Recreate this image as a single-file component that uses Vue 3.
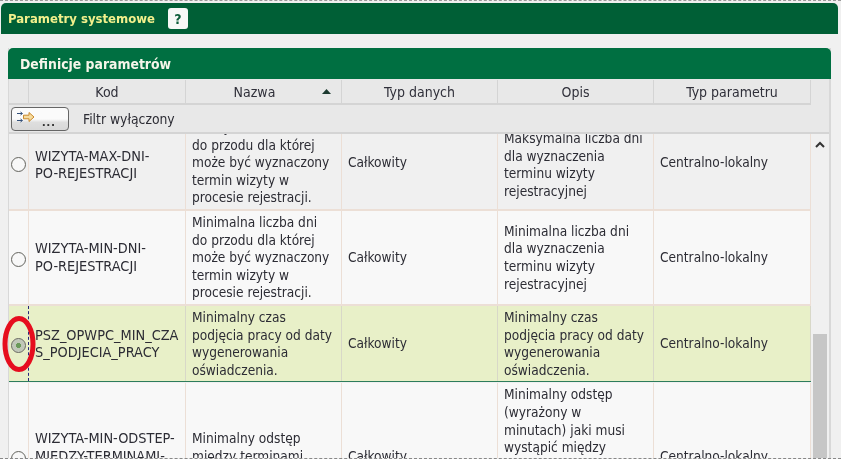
<script setup>
const cols = [
  { name: 'Kod' },
  { name: 'Nazwa', sort: true },
  { name: 'Typ danych' },
  { name: 'Opis' },
  { name: 'Typ parametru' },
]
const rows = [
  { cls: 'odd', kod: 'WIZYTA-MAX-DNI-\nPO-REJESTRACJI', nazwa: 'Maksymalna liczba dni\ndo przodu dla której\nmoże być wyznaczony\ntermin wizyty w\nprocesie rejestracji.', typ: 'Całkowity', opis: 'Maksymalna liczba dni\ndla wyznaczenia\nterminu wizyty\nrejestracyjnej', par: 'Centralno-lokalny' },
  { cls: 'even', kod: 'WIZYTA-MIN-DNI-\nPO-REJESTRACJI', nazwa: 'Minimalna liczba dni\ndo przodu dla której\nmoże być wyznaczony\ntermin wizyty w\nprocesie rejestracji.', typ: 'Całkowity', opis: 'Minimalna liczba dni\ndla wyznaczenia\nterminu wizyty\nrejestracyjnej', par: 'Centralno-lokalny' },
  { cls: 'sel', kod: 'PSZ_OPWPC_MIN_CZA\nS_PODJECIA_PRACY', nazwa: 'Minimalny czas\npodjęcia pracy od daty\nwygenerowania\noświadczenia.', typ: 'Całkowity', opis: 'Minimalny czas\npodjęcia pracy od daty\nwygenerowania\noświadczenia.', par: 'Centralno-lokalny' },
  { cls: 'even', kod: 'WIZYTA-MIN-ODSTEP-\nMIEDZY-TERMINAMI-\nWIZYT', nazwa: 'Minimalny odstęp\nmiędzy terminami\nwizyt.', typ: 'Całkowity', opis: 'Minimalny odstęp\n(wyrażony w\nminutach) jaki musi\nwystąpić między\nterminami wizyt\nw ramach jednej\nrejestracji w tym\nsamym dniu', par: 'Centralno-lokalny' },
]
</script>

<template>
  <div class="page">
    <div class="frame">
      <div class="titlebar">
        <span class="title">Parametry systemowe</span>
        <span class="help">?</span>
      </div>
      <div class="panel">
        <div class="panel-head">Definicje parametrów</div>
        <div class="head-row">
          <div class="hc first"></div>
          <div v-for="c in cols" :key="c.name" class="hc" :class="{ sorted: c.sort }">
            {{ c.name }}
            <svg v-if="c.sort" class="sort" width="9" height="5" viewBox="0 0 9 5"><path d="M4.5 0 L9 5 H0 Z" fill="#1c3a30" /></svg>
          </div>
        </div>
        <div class="filter-row">
          <button class="filter-btn">
            <svg class="filter-ico" width="18" height="12" viewBox="0 0 18 12">
              <path d="M0 2.5h5M0 9.5h5" stroke="#33507a" stroke-width="1.2" />
              <path d="M3.5 1 5.5 2.5 3.5 4M3.5 8 5.5 9.5 3.5 11" fill="none" stroke="#33507a" stroke-width="1" />
              <path d="M6.5 4.2h5.5V1.5L17 6l-5 4.5V7.8H6.5Z" fill="#f6dca0" stroke="#c9892c" stroke-width="1" />
            </svg>
            <span class="dots">...</span>
          </button>
          <span class="filter-text">Filtr wyłączony</span>
        </div>
        <div class="body">
          <div class="viewport">
            <div class="rows">
              <div v-for="r in rows" :key="r.kod" class="row" :class="r.cls">
                <div class="cell radio-cell"><span class="radio"></span></div>
                <div class="cell kod">{{ r.kod }}</div>
                <div class="cell">{{ r.nazwa }}</div>
                <div class="cell">{{ r.typ }}</div>
                <div class="cell">{{ r.opis }}</div>
                <div class="cell">{{ r.par }}</div>
              </div>
            </div>
          </div>
          <div class="scrollbar">
            <svg class="arrow" width="10" height="7" viewBox="0 0 10 7"><path d="M1 6 5 2l4 4" fill="none" stroke="#333" stroke-width="2" /></svg>
            <div class="thumb"></div>
          </div>
        </div>
      </div>
    </div>
    <svg class="mark" width="36" height="60" viewBox="0 0 36 60">
      <ellipse cx="17" cy="30" rx="14" ry="25.5" fill="none" stroke="#e60d1e" stroke-width="5" />
    </svg>
  </div>
</template>

<style>
html, body { margin: 0; background: #fff; }
</style>

<style scoped>
.page {
  position: relative;
  width: 841px;
  height: 461px;
  overflow: hidden;
  background: #fff;
  font-family: "DejaVu Sans Condensed", "DejaVu Sans", sans-serif;
  font-size: 13.6px;
  color: #2c2c34;
  filter: blur(0.3px);
}
.frame {
  box-sizing: border-box;
  height: 459px;
  padding: 2px 3px 0 1px;
  background: #f0f0f0;
  border-top: 1px dashed #999;
  border-bottom: 1px dashed #888;
  overflow: hidden;
}
.titlebar {
  display: flex;
  align-items: center;
  gap: 13px;
  height: 31px;
  padding-left: 7px;
  box-sizing: border-box;
  border-radius: 5px 5px 0 0;
  background: #005f36;
}
.title { color: #f2f08c; font-weight: 700; font-size: 13px; }
.help {
  width: 20px;
  height: 21px;
  display: flex;
  align-items: center;
  justify-content: center;
  border-radius: 3px;
  background: #f6f8f6;
  color: #0b5c38;
  font-weight: 700;
  font-size: 14px;
}
.panel {
  margin: 14px 7px 0 7px;
  border-right: 2px solid #d8d8d8;
  border-left: 1px solid #d8d8d8;
}
.panel-head {
  height: 31px;
  margin: 0 -2px 0 -1px;
  padding: 1px 0 0 12px;
  box-sizing: border-box;
  display: flex;
  align-items: center;
  border-radius: 5px 5px 0 0;
  background: #006f41;
  color: #f6f6ea;
  font-weight: 700;
  font-size: 13.85px;
}
.head-row {
  display: grid;
  grid-template-columns: 20px 157px 156px 156px 156px 157px;
  height: 26px;
  background: #e8e8e8;
  padding-top: 1px;
  box-sizing: border-box;
}
.hc {
  position: relative;
  display: flex;
  align-items: center;
  justify-content: center;
  border-right: 1px solid #d4d4d4;
  border-bottom: 2px solid #d4d4d4;
  box-sizing: border-box;
  font-size: 14px;
  color: #30303a;
}
.hc.sorted { padding-right: 18px; }
.sort { position: absolute; right: 10px; top: 9px; }
.filter-row {
  display: flex;
  align-items: center;
  height: 29px;
  box-sizing: border-box;
  padding-left: 2px;
  gap: 14px;
  background: #e8e8e8;
  border-bottom: 2px solid #d4d4d4;
}
.filter-btn {
  position: relative;
  width: 58px;
  height: 24px;
  padding: 0;
  box-sizing: border-box;
  border: 1.5px solid #666;
  border-radius: 4px;
  background: linear-gradient(#fbfbfb 0 50%, #dedede 65%, #d8d8d8);
}
.filter-ico { position: absolute; left: 5px; top: 3px; }
.dots { position: absolute; left: 30px; top: 6px; font-size: 13px; letter-spacing: 1px; font-weight: 700; color: #333; }
.filter-text { font-size: 13.8px; }
.body { display: flex; height: 325px; }
.viewport { width: 802px; overflow: hidden; flex: none; }
.rows { margin-top: -18px; }
.row {
  display: grid;
  grid-template-columns: 20px 157px 156px 156px 156px 157px;
  border-bottom: 2px solid #ecdfd6;
}
.row.odd { background: #f0f0f0; }
.row.even { background: #f8f8f8; }
.row.sel { background: #e8f0c8; border-bottom: 1px solid #2d7d5c; margin-bottom: 1px; }
.cell {
  box-sizing: border-box;
  padding: 3px 4px 2px 6px;
  line-height: 17.6px;
  border-right: 1px solid #ecdfd6;
  white-space: pre-line;
  display: flex;
  align-items: center;
}
.cell.kod { font-size: 14.4px; padding-right: 0; }
.row.odd .cell:nth-child(2), .row.odd .cell:nth-child(5) { padding-top: 8px; }
.row.sel .cell { border-right-color: #d8d8c8; }
.radio-cell { padding: 0; justify-content: center; }
.row.sel .radio-cell { border-right: 1px dashed #27277a; }
.radio {
  width: 15px;
  height: 15px;
  margin-top: 4px;
  box-sizing: border-box;
  border: 1.5px solid #666660;
  border-radius: 50%;
  background: radial-gradient(circle, #f8f8f8 0 60%, #dcdcdc 100%);
}
.row.sel .radio {
  background: radial-gradient(circle, #6a9a5a 0 25%, #c0c8b8 30% 60%, #e8e8e0 100%);
}
.scrollbar {
  position: relative;
  flex: 1;
  background: #f0f0f0;
}
.arrow { position: absolute; left: 4px; top: 7px; }
.thumb { position: absolute; left: 2px; right: 2px; top: 200px; bottom: 0; background: #c6c6c6; }
.mark { position: absolute; left: 2px; top: 314px; }
</style>
